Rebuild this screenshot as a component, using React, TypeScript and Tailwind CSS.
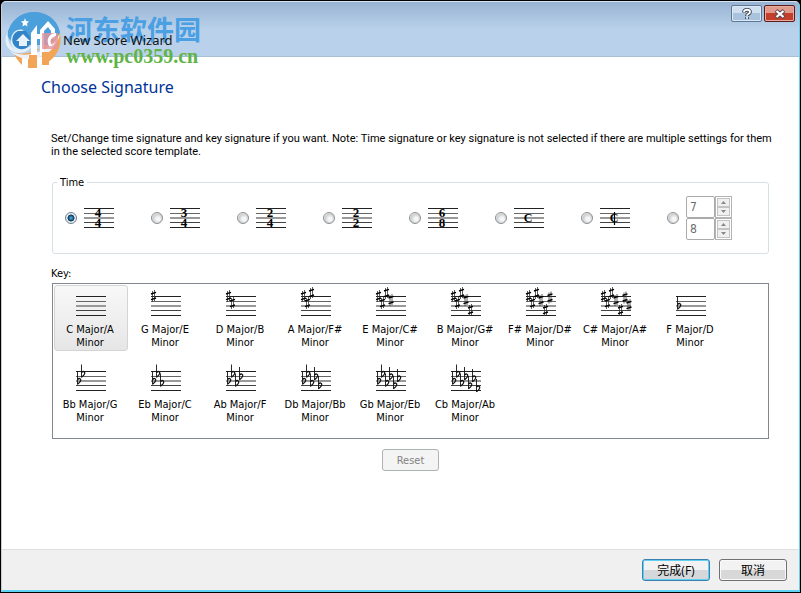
import { useState } from "react";

const timeOptions = [
  { id: "4-4", top: "4", bottom: "4" },
  { id: "3-4", top: "3", bottom: "4" },
  { id: "2-4", top: "2", bottom: "4" },
  { id: "2-2", top: "2", bottom: "2" },
  { id: "6-8", top: "6", bottom: "8" },
  { id: "common", common: true },
  { id: "cut", common: true, cut: true },
];

const keys = [
  { name: "C Major/A", sharps: 0, flats: 0 },
  { name: "G Major/E", sharps: 1, flats: 0 },
  { name: "D Major/B", sharps: 2, flats: 0 },
  { name: "A Major/F#", sharps: 3, flats: 0 },
  { name: "E Major/C#", sharps: 4, flats: 0 },
  { name: "B Major/G#", sharps: 5, flats: 0 },
  { name: "F# Major/D#", sharps: 6, flats: 0 },
  { name: "C# Major/A#", sharps: 7, flats: 0 },
  { name: "F Major/D", sharps: 0, flats: 1 },
  { name: "Bb Major/G", sharps: 0, flats: 2 },
  { name: "Eb Major/C", sharps: 0, flats: 3 },
  { name: "Ab Major/F", sharps: 0, flats: 4 },
  { name: "Db Major/Bb", sharps: 0, flats: 5 },
  { name: "Gb Major/Eb", sharps: 0, flats: 6 },
  { name: "Cb Major/Ab", sharps: 0, flats: 7 },
];

// centre of each accidental, in the order it is added to the staff
const sharpPos = [[2.5, 10], [6.5, 17], [10.5, 7], [15, 14], [19.5, 24], [24, 11.5], [28, 19]];
const flatPos = [[1.5, 19.5], [5.5, 12.5], [9.5, 21.5], [13.5, 15], [17.5, 24], [21.5, 17], [25.5, 27]];

const StaffLines = ({ y }: { y: number }) => (
  <g>
    <rect x="0" y={y} width="30" height="1" fill="#222" />
    <rect x="0" y={y + 5} width="30" height="1" fill="#666" />
    <rect x="0" y={y + 9} width="30" height="2" fill="#999" />
    <rect x="0" y={y + 14} width="30" height="1" fill="#444" />
    <rect x="0" y={y + 19} width="30" height="1" fill="#222" />
  </g>
);

const TimeIcon = ({ top, bottom, common, cut }: { top?: string; bottom?: string; common?: boolean; cut?: boolean }) => (
  <svg width="30" height="26" viewBox="0 0 30 26" className="shrink-0 overflow-visible" aria-hidden="true">
    <StaffLines y={3} />
    <g className="font-['Liberation_Serif',serif] font-bold" textAnchor="middle" fill="#000">
      {common ? (
        <text x="14" y="17" fontSize="12">C</text>
      ) : (
        <>
          <text x="14" y="12" fontSize="13">{top}</text>
          <text x="14" y="22" fontSize="13">{bottom}</text>
        </>
      )}
    </g>
    {cut && <path d="M14.5 7v13" stroke="#000" strokeWidth="1.2" />}
  </svg>
);

const KeyIcon = ({ sharps, flats }: { sharps: number; flats: number }) => (
  <svg width="30" height="34" viewBox="0 0 30 34" className="overflow-visible" aria-hidden="true">
    <StaffLines y={10} />
    {sharpPos.slice(0, sharps).map(([x, y]) => (
      <g key={x} transform={`translate(${x} ${y})`}>
        <path d="M-1 -5V6M1 -6V5" stroke="#333" strokeWidth="0.8" />
        <path d="M-2.5 -2L2.5 -3.6M-2.5 3.6L2.5 2" stroke="#000" strokeWidth="1.5" />
      </g>
    ))}
    {flatPos.slice(0, flats).map(([x, y]) => (
      <g key={x} transform={`translate(${x} ${y})`} fill="none" stroke="#111">
        <path d="M0 -9V4" strokeWidth="0.9" />
        <path d="M0 -1C1.5 -2.6 3.6 -2.2 3.2 0C2.9 1.6 1.2 2.8 0 3.6" strokeWidth="1.3" />
      </g>
    ))}
  </svg>
);

const SpinBox = ({ label, value, onChange }: { label: string; value: number; onChange: (v: number) => void }) => (
  <div className="flex h-[22px]">
    <input
      aria-label={label}
      value={value}
      readOnly
      className="w-[29px] rounded-[2px] border border-[#aaa] bg-white px-[3px] text-[12px] text-[#6d6d6d] outline-none"
    />
    <div className="flex w-[17px] flex-col border border-[#b4b4b4] bg-white p-px">
      <button
        aria-label={`${label} up`}
        onClick={() => onChange(value + 1)}
        className="flex flex-1 items-center justify-center border border-[#c4c4c4] bg-[#f0f0f0]"
      >
        <svg width="5" height="3" viewBox="0 0 5 3"><path d="M0 3L2.5 0L5 3z" fill="#888" /></svg>
      </button>
      <button
        aria-label={`${label} down`}
        onClick={() => onChange(Math.max(1, value - 1))}
        className="flex flex-1 items-center justify-center border border-[#c4c4c4] bg-[#f0f0f0]"
      >
        <svg width="5" height="3" viewBox="0 0 5 3"><path d="M0 0L2.5 3L5 0z" fill="#888" /></svg>
      </button>
    </div>
  </div>
);

const radioClass =
  "h-3 w-3 shrink-0 appearance-none rounded-full border border-[#8e8f8f] bg-[radial-gradient(circle_at_60%_60%,#f6f6f6_20%,#c9cdd1_60%,#f4f4f4_75%)] checked:border-[#6d7f8c] checked:bg-[radial-gradient(circle_at_50%_50%,#4fb4dc_0%,#15507c_35%,#0d3556_45%,#e8eef2_54%)]";

const Watermark = () => (
  <div className="pointer-events-none absolute left-[3px] top-[9px] flex items-start gap-[5px]">
    <svg width="56" height="58" viewBox="0 0 56 58" aria-hidden="true">
      <path d="M2 24C5 9 16 1 29 1C42 1 53 9 55 22L48 34L8 34z" fill="#4b9fdb" />
      <path d="M9 42C24 45 42 38 55 22C58 37 50 49 37 54V38H32V57H23V44H17V54C13 50 10 46 9 42z" fill="#f2a556" />
      <path d="M3 20C-2 29 0 41 14 42C20 42 25 39 27 35C21 38 12 36 11 29C10 24 14 21 19 19C12 17 7 21 6 28C5 33 8 38 14 39C6 38 1 30 3 20z" fill="#e3eff9" />
      <path d="M13 20C6 23 5 33 12 37C18 40 24 37 25 32V26L21 20z" fill="#3284c6" />
      <path d="M11 30L18 23L25 30H22V35H14V30z" fill="#e8f2fa" />
      <path d="M5 40C22 49 44 41 55 23C49 47 22 56 5 40z" fill="#eef2f8" />
      <path d="M26 45V22L32 14V45zM35 45V19L43 10L50 18V28H46V20L43 16L39 20V42z" fill="#fff" />
      <path d="M32 23h5v5h-5z" fill="#fff" />
      <path d="M24 44h8v13h-8zM37 41h7v13h-7z" fill="#f2a556" />
      <path d="M37 22h16v16H37z" fill="#e5949d" fillOpacity="0.8" />
      <path d="M51 22C43 23 41 29 44 35C47 36 49 34 50 31L47 34C44 30 46 26 51 25z" fill="#fff" />
      <path d="M20 7l1 3 3 .5-2 2 .5 3-2.5-1.5-2.5 1.5.5-3-2-2 3-.5z" fill="#fff" />
    </svg>
    <div className="flex flex-col pt-[4px]">
      <span className="font-['Noto_Sans_CJK_SC',sans-serif] text-[27px] font-bold leading-[28px] text-[#4b9fe3]">河东软件园</span>
      <span className="font-['Liberation_Serif',serif] text-[20px] font-bold leading-[26px] text-[#5fb446]">www.pc0359.cn</span>
    </div>
  </div>
);

const TitleBar = () => (
  <header className="relative flex h-[55px] shrink-0 items-start justify-end border-b border-[#a9bfd6] bg-gradient-to-b from-[#98b3d2] to-[#b9d1ea] to-50% pr-1">
    <Watermark />
    <h1 className="relative mr-auto pl-[61px] pt-[29px] font-['Noto_Sans',sans-serif] text-[13px] leading-[18px] text-[#111]">New Score Wizard</h1>
    <div className="flex gap-[2px] pt-[3px]">
      <button aria-label="Help" className="flex h-[17px] w-[31px] items-center justify-center rounded-[2px] border border-[#5d7797] bg-gradient-to-b from-[#cfdff0] from-50% to-[#a9c3df] to-50% shadow-[inset_0_0_0_1px_#dbe8f5]">
        <svg width="10" height="12" viewBox="0 0 10 12">
          <path d="M2 4.5C2 1 8 1 8 4C8 6 5 5.5 5 8M5 9V11" fill="none" stroke="#3f4956" strokeWidth="3.8" />
          <path d="M2 4C2 1 8 1 8 4C8 6 5 5.5 5 7.7M5 9V10.8" fill="none" stroke="#fff" strokeWidth="1.8" />
        </svg>
      </button>
      <button aria-label="Close" className="flex h-[17px] w-[31px] items-center justify-center rounded-[2px] border border-[#5b1a1c] bg-gradient-to-b from-[#e09a8b] from-45% to-[#c2402b] to-50% shadow-[inset_0_0_0_1px_#e8ab9e]">
        <svg width="12" height="10" viewBox="0 0 12 10">
          <path d="M2 1.5L10 8.5M10 1.5L2 8.5" stroke="#5a4a55" strokeWidth="4" />
          <path d="M2.5 2L9.5 8M9.5 2L2.5 8" stroke="#fff" strokeWidth="2.2" />
        </svg>
      </button>
    </div>
  </header>
);

export default function App() {
  const [time, setTime] = useState("4-4");
  const [selectedKey, setSelectedKey] = useState("C Major/A");
  const [beats, setBeats] = useState(7);
  const [unit, setUnit] = useState(8);

  return (
    <div className="min-h-screen bg-black p-px font-['DejaVu_Sans_Condensed','Noto_Sans_CJK_SC',sans-serif] text-[11px] leading-[13px] text-black">
      <div className="flex min-h-[calc(100vh-2px)] flex-col overflow-hidden rounded-t-[5px] border border-b-2 border-[#5fd3f3] border-l-[#c9cdd6] border-t-[#d5e3f2] bg-white">
        <TitleBar />

        <main className="flex-1 pl-[50px] pr-[30px] pt-[19px]">
          <h2 className="-ml-[11px] font-['Noto_Sans',sans-serif] text-[16px] leading-[22px] text-[#003399]">Choose Signature</h2>

          <p className="-ml-px -mr-3 mt-[34px] font-['Roboto',sans-serif]">
            Set/Change time signature and key signature if you want. Note: Time signature or key signature is not
            selected if there are multiple settings for them in the selected score template.
          </p>

          <fieldset className="mt-[18px] h-[78px] rounded-[3px] border border-[#d5dfe5] px-3">
            <legend className="-ml-2 px-[3px]">Time</legend>
            <div className="flex h-[58px] items-center">
              {timeOptions.map((opt) => (
                <label key={opt.id} className="flex w-[86px] items-center gap-[7px]">
                  <input
                    type="radio"
                    name="time"
                    aria-label={opt.id}
                    checked={time === opt.id}
                    onChange={() => setTime(opt.id)}
                    className={radioClass}
                  />
                  <TimeIcon top={opt.top} bottom={opt.bottom} common={opt.common} cut={opt.cut} />
                </label>
              ))}
              <div className="flex items-center gap-[7px]">
                <input
                  type="radio"
                  name="time"
                  aria-label="Custom"
                  checked={time === "custom"}
                  onChange={() => setTime("custom")}
                  className={radioClass}
                />
                <div className="flex flex-col">
                  <SpinBox label="Beats" value={beats} onChange={setBeats} />
                  <SpinBox label="Unit" value={unit} onChange={setUnit} />
                </div>
              </div>
            </div>
          </fieldset>

          <h3 className="-ml-px mt-[13px]">Key:</h3>
          <div className="mt-[3px] flex min-h-[156px] flex-wrap content-start gap-x-px gap-y-[9px] border border-[#828790] p-px">
            {keys.map((key) => (
              <button
                key={key.name}
                onClick={() => setSelectedKey(key.name)}
                className={`flex h-[66px] w-[74px] flex-col items-center rounded-[3px] border ${
                  selectedKey === key.name
                    ? "border-[#d4d4d4] bg-gradient-to-b from-[#f8f8f8] to-[#e6e6e6]"
                    : "border-transparent"
                }`}
              >
                <KeyIcon sharps={key.sharps} flats={key.flats} />
                <span className="mt-[3px] whitespace-nowrap pr-[2px]">
                  {key.name}
                  <br />
                  Minor
                </span>
              </button>
            ))}
          </div>

          <div className="mt-[10px] flex justify-center">
            <button
              onClick={() => setSelectedKey("C Major/A")}
              className="h-[22px] w-[57px] rounded-[3px] border border-[#adb2b5] bg-[#f4f4f4] text-[#838383]"
            >
              Reset
            </button>
          </div>
        </main>

        <footer className="flex shrink-0 justify-end gap-[9px] border-t border-[#dfdfdf] bg-[#f0f0f0] px-3 py-[9px] font-['Open_Sans','Noto_Sans_CJK_SC',sans-serif] text-[12px]">
          <button className="h-[22px] w-[68px] rounded-[3px] border border-[#3c7fb1] bg-gradient-to-b from-[#f2f2f2] from-50% to-[#d4d8da] to-50% shadow-[inset_0_0_0_1px_#5fd0f2]">
            完成(F)
          </button>
          <button className="h-[22px] w-[68px] rounded-[3px] border border-[#707070] bg-gradient-to-b from-[#f2f2f2] from-50% to-[#d8d8d8] to-50% shadow-[inset_0_0_0_1px_#fafafa]">
            取消
          </button>
        </footer>
      </div>
    </div>
  );
}
